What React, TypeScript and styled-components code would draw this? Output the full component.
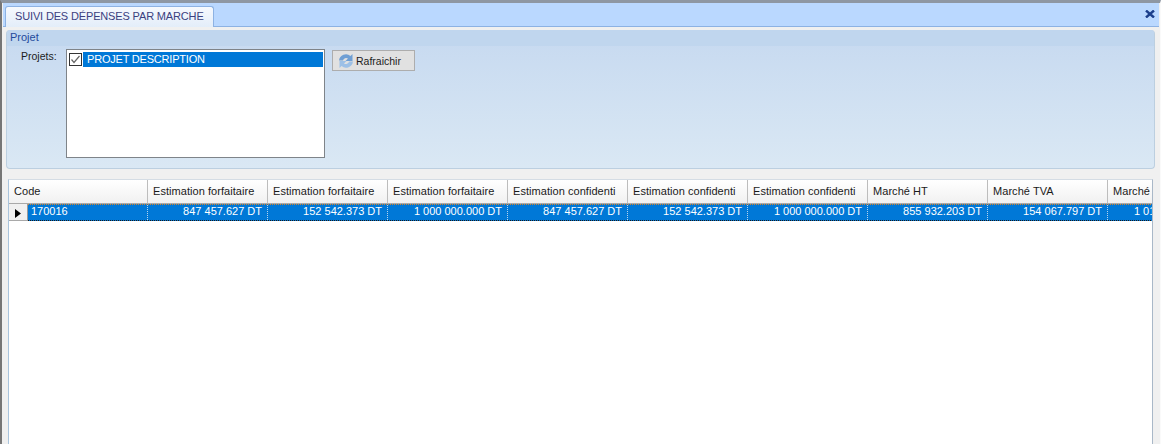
import { createGlobalStyle } from 'styled-components';
import styled from 'styled-components';

const GlobalStyle = createGlobalStyle`
    html, body {
        margin: 0;
        padding: 0;
        background: #f0f0f0;
    }
    * {
        box-sizing: border-box;
    }
`;

const Frame = styled.div`
    width: 1161px;
    height: 444px;
    overflow: hidden;
    display: flex;
    flex-direction: column;
    padding: 0 0 0 1px;
    background: #f0f0f0;
    border-top: 3px solid #8e97a3;
    border-left: 2px solid #767676;
    border-right: 1px solid #fafafa;
    font-family: "Liberation Sans", Arial, sans-serif;
    font-size: 11px;
    color: #1a1a1a;
`;
const TabBar = styled.div`
    height: 24px;
    flex: none;
    display: flex;
    align-items: flex-end;
    justify-content: space-between;
    padding: 0 0 0 2px;
    margin-right: 1px;
    background: #bad8ff;
    border-bottom: 1px solid #8db2e3;
`;
const Tab = styled.div`
    width: 209px;
    height: 21px;
    margin-bottom: -1px;
    padding: 3px 0 0 9px;
    font-size: 11px;
    letter-spacing: -0.15px;
    color: #3b3f80;
    white-space: nowrap;
    background: linear-gradient(#f6f9fe, #e3edf9);
    border: 1px solid #8db2e3;
    border-bottom: 0;
    border-radius: 3px 3px 0 0;
`;
const CloseIcon = styled.svg`
    width: 10px;
    height: 8px;
    margin: 0 4px 8px 0;
`;
const Content = styled.div`
    flex: 1;
    min-height: 0;
    display: flex;
    flex-direction: column;
    padding: 3px 5px 0 3px;
`;
const GroupPanel = styled.section`
    height: 139px;
    flex: none;
    border: 1px solid #bccfe0;
    border-top: 0;
    border-radius: 4px;
    background: linear-gradient(#c6d9f0, #dae8f4);
    overflow: hidden;
`;
const GroupCaption = styled.div`
    height: 16px;
    padding: 1px 0 0 3px;
    font-size: 11px;
    color: #1f4a9c;
    background: #c0d6ee;
`;
const GroupBody = styled.div`
    display: flex;
    align-items: flex-start;
    padding: 3px 0 0 14px;
`;
const FieldLabel = styled.label`
    width: 45px;
    padding-top: 1px;
    font-size: 10.5px;
    color: #1c1c1c;
`;
const ListBox = styled.div`
    width: 259px;
    height: 109px;
    padding: 1px;
    background: #fff;
    border: 1px solid #7f8489;
`;
const ListItem = styled.div`
    display: flex;
    align-items: center;
    height: 16px;
`;
const CheckBox = styled.svg`
    width: 13px;
    height: 13px;
    flex: none;
    margin: 0 1px;
`;
const ItemText = styled.div`
    flex: 1;
    height: 15px;
    padding: 0 0 0 4px;
    line-height: 14px;
    font-size: 11px;
    letter-spacing: -0.2px;
    color: #fff;
    background: #0078d7;
`;
const RefreshButton = styled.button`
    width: 83px;
    height: 21px;
    margin: 1px 0 0 7px;
    padding: 0 0 0 5px;
    display: flex;
    align-items: center;
    gap: 2px;
    font-family: inherit;
    font-size: 10.5px;
    color: #1c1c1c;
    background: #e1e1e1;
    border: 1px solid #adadad;
`;
const GridBox = styled.div`
    flex: 1;
    min-height: 0;
    margin: 10px 2px 0 2px;
    background: #fff;
    border-left: 1px solid #a9c4dd;
    border-right: 1px solid #a9b8c8;
    border-top: 1px solid #d4dce4;
    overflow: hidden;
`;
const HeaderRow = styled.div`
    display: flex;
    height: 24px;
    width: 1300px;
`;
const HeaderCell = styled.div<{ $w: number }>`
    width: ${(p) => p.$w}px;
    flex: none;
    padding: 5px 0 0 5px;
    font-size: 11px;
    letter-spacing: 0.05px;
    color: #1a1a1a;
    white-space: nowrap;
    overflow: hidden;
    background: linear-gradient(#ffffff, #f1f1f1);
    border-right: 1px solid #bdbdbd;
    border-bottom: 1px solid #a9a9a9;
`;
const DataRow = styled.div`
    display: flex;
    height: 17px;
    width: 1300px;
`;
const RowMarker = styled.div`
    width: 19px;
    flex: none;
    display: flex;
    align-items: center;
    justify-content: center;
    padding-top: 2px;
    background: #f0f0f0;
    border-right: 1px solid #9a9a9a;
    border-bottom: 1px solid #a9a9a9;
`;
const Arrow = styled.svg`
    width: 6px;
    height: 9px;
`;
const SelectedCells = styled.div`
    display: flex;
    flex: 1;
    background: #0078d7;
    border-top: 1px dotted #d9852b;
    border-bottom: 1px dotted #1a1a1a;
`;
const DataCell = styled.div<{ $w: number; $left?: boolean }>`
    width: ${(p) => p.$w}px;
    flex: none;
    padding: 0 5px 0 3px;
    line-height: 13px;
    font-size: 11px;
    color: #fff;
    text-align: ${(p) => (p.$left ? 'left' : 'right')};
    white-space: nowrap;
    overflow: hidden;
    border-right: 1px dotted #b8d4ee;
`;

const headers = [
    'Code',
    'Estimation forfaitaire',
    'Estimation forfaitaire',
    'Estimation forfaitaire',
    'Estimation confidenti',
    'Estimation confidenti',
    'Estimation confidenti',
    'Marché HT',
    'Marché TVA',
    'Marché',
];
const values = [
    '847 457.627 DT',
    '152 542.373 DT',
    '1 000 000.000 DT',
    '847 457.627 DT',
    '152 542.373 DT',
    '1 000 000.000 DT',
    '855 932.203 DT',
    '154 067.797 DT',
    '1 010 000.000 DT',
];

export default function App() {
    return (
        <Frame>
            <GlobalStyle />
            <TabBar>
                <Tab>SUIVI DES DÉPENSES PAR MARCHE</Tab>
                <CloseIcon viewBox="0 0 10 8">
                    <path d="M1 0.5 L9 7.5 M9 0.5 L1 7.5" stroke="#1c3f8c" strokeWidth="2.4" fill="none" />
                </CloseIcon>
            </TabBar>
            <Content>
                <GroupPanel>
                    <GroupCaption>Projet</GroupCaption>
                    <GroupBody>
                        <FieldLabel>Projets:</FieldLabel>
                        <ListBox>
                            <ListItem>
                                <CheckBox viewBox="0 0 13 13">
                                    <rect x="0.5" y="0.5" width="12" height="12" fill="#fff" stroke="#333" />
                                    <path d="M2.5 6.5 L5 9.5 L10.5 3" stroke="#666" strokeWidth="1.2" fill="none" />
                                </CheckBox>
                                <ItemText>PROJET DESCRIPTION</ItemText>
                            </ListItem>
                        </ListBox>
                        <RefreshButton>
                            <svg width="16" height="16" viewBox="0 0 16 16">
                                <path d="M1 7.5 A7 7 0 0 1 12.5 3 L14.5 1 V8 H7.5 L10 5.5 A3.2 3.2 0 0 0 5 7.5 Z" fill="#6f9fd4" />
                                <path d="M15 8.5 A7 7 0 0 1 3.5 13 L1.5 15 V8 H8.5 L6 10.5 A3.2 3.2 0 0 0 11 8.5 Z" fill="#9dc0e6" />
                            </svg>
                            Rafraichir
                        </RefreshButton>
                    </GroupBody>
                </GroupPanel>
                <GridBox>
                    <HeaderRow>
                        {headers.map((h, i) => (
                            <HeaderCell key={i} $w={i === 0 ? 139 : 120}>
                                {h}
                            </HeaderCell>
                        ))}
                    </HeaderRow>
                    <DataRow>
                        <RowMarker>
                            <Arrow viewBox="0 0 6 9">
                                <path d="M0 0 L6 4.5 L0 9 Z" fill="#000" />
                            </Arrow>
                        </RowMarker>
                        <SelectedCells>
                            <DataCell $w={120} $left>170016</DataCell>
                            {values.map((v, i) => (
                                <DataCell key={i} $w={120}>{v}</DataCell>
                            ))}
                        </SelectedCells>
                    </DataRow>
                </GridBox>
            </Content>
        </Frame>
    );
}
